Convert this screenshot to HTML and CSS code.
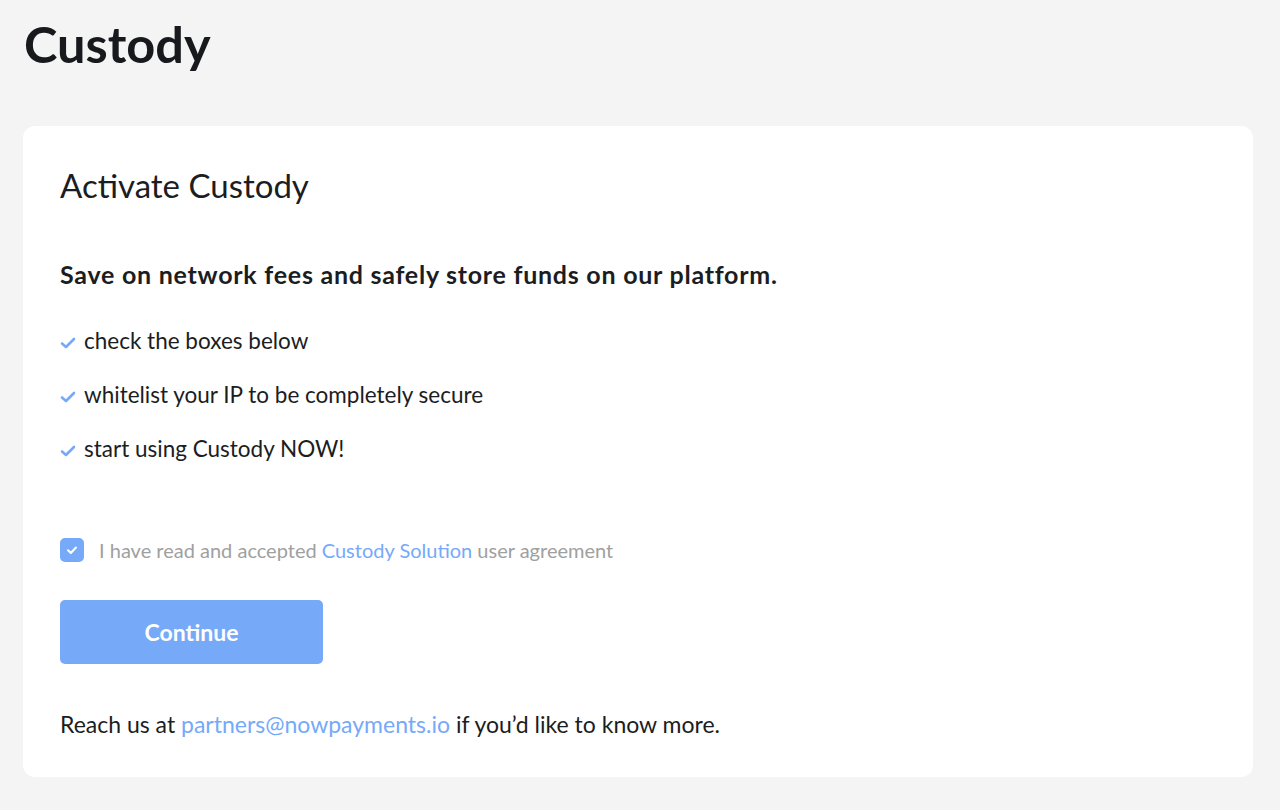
FILE: index.html
```html
<!DOCTYPE html>
<html lang="en">
<head>
<meta charset="utf-8">
<title>Custody</title>
<link rel="stylesheet" href="styles.css">
</head>
<body>
<main class="page">
  <h1 class="page-title">Custody</h1>
  <section class="card">
    <h2 class="card-title">Activate Custody</h2>
    <p class="lead">Save on network fees and safely store funds on our platform.</p>
    <ul class="steps">
      <li class="step"><svg class="tick" viewBox="0 0 16 12" width="16" height="12"><path d="M2 6.5 L6 10 L14 2" fill="none" stroke="#75a9f9" stroke-width="2.6" stroke-linecap="round" stroke-linejoin="round"/></svg><span>check the boxes below</span></li>
      <li class="step"><svg class="tick" viewBox="0 0 16 12" width="16" height="12"><path d="M2 6.5 L6 10 L14 2" fill="none" stroke="#75a9f9" stroke-width="2.6" stroke-linecap="round" stroke-linejoin="round"/></svg><span>whitelist your IP to be completely secure</span></li>
      <li class="step"><svg class="tick" viewBox="0 0 16 12" width="16" height="12"><path d="M2 6.5 L6 10 L14 2" fill="none" stroke="#75a9f9" stroke-width="2.6" stroke-linecap="round" stroke-linejoin="round"/></svg><span>start using Custody NOW!</span></li>
    </ul>
    <label class="agree">
      <span class="checkbox"><svg viewBox="0 0 24 24" width="24" height="24"><path d="M8 12.2 L10.8 15 L16 9.5" fill="none" stroke="#fff" stroke-width="2" stroke-linecap="round" stroke-linejoin="round"/></svg></span>
      <span class="agree-text">I have read and accepted <a class="link" href="#">Custody Solution</a> user agreement</span>
    </label>
    <button class="btn" type="button">Continue</button>
    <p class="contact">Reach us at <a class="link" href="#">partners@nowpayments.io</a> if you’d like to know more.</p>
  </section>
</main>
</body>
</html>
```

FILE: styles.css
```css
* { box-sizing: border-box; }
html, body { margin: 0; padding: 0; }
body {
  background: #f4f4f4;
  font-family: Lato, "Open Sans", "Liberation Sans", sans-serif;
  color: #1b1d21;
}
.page {
  padding: 14px 27px 0 23px;
}
.page-title {
  margin: 0 0 0 1px;
  font-size: 50.5px;
  line-height: 60px;
  font-weight: 700;
  color: #17191d;
}
.card {
  margin-top: 52px;
  background: #fff;
  border-radius: 12px;
  padding: 39px 37px 38px 37px;
}
.card-title {
  margin: 0;
  font-size: 33px;
  line-height: 40px;
  font-weight: 400;
}
.lead {
  margin: 54px 0 0;
  font-size: 25px;
  line-height: 30px;
  font-weight: 700;
  letter-spacing: 0.75px;
}
.steps {
  list-style: none;
  margin: 37px 0 0;
  padding: 0;
  display: flex;
  flex-direction: column;
  gap: 24px;
}
.step {
  display: flex;
  align-items: center;
  gap: 8px;
  font-size: 22.5px;
  line-height: 30px;
}
.tick { flex: none; margin-top: 4px; }
.agree {
  margin-top: 74px;
  display: flex;
  align-items: center;
  gap: 15px;
  font-size: 20px;
  line-height: 24px;
  color: #a0a0a0;
}
.checkbox {
  width: 24px;
  height: 24px;
  border-radius: 5px;
  background: #76aaf8;
  display: block;
  flex: none;
}
.checkbox svg { display: block; }
.link { color: #75a9f9; text-decoration: none; }
.btn {
  display: block;
  margin-top: 38px;
  width: 263px;
  height: 64px;
  border: 0;
  border-radius: 5px;
  background: #76aaf8;
  color: #fff;
  font-family: inherit;
  font-size: 23px;
  font-weight: 700;
}
.contact {
  margin: 45px 0 0;
  font-size: 23px;
  line-height: 30px;
}
```
